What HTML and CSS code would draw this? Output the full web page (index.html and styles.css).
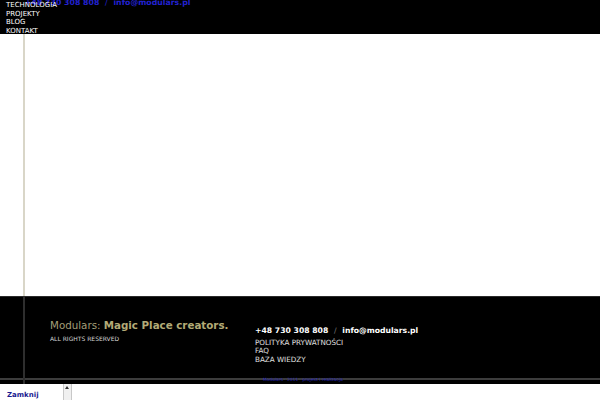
FILE: index.html
```html
<!DOCTYPE html>
<html lang="pl">
<head>
<meta charset="utf-8">
<title>Modulars</title>
<link rel="stylesheet" href="styles.css">
</head>
<body>
<div class="page">
  <header class="header">
    <div class="top-contact">+48 730 308 808 <span class="sep">/</span> info@modulars.pl</div>
    <ul class="nav">
      <li>TECHNOLOGIA</li>
      <li>PROJEKTY</li>
      <li>BLOG</li>
      <li>KONTAKT</li>
    </ul>
  </header>
  <main class="content"></main>
  <footer class="footer">
    <div class="footer-main">
      <div class="footer-left">
        <div class="claim"><span class="claim-light">Modulars: </span><strong>Magic Place creators.</strong></div>
        <div class="rights">ALL RIGHTS RESERVED</div>
      </div>
      <div class="footer-right">
        <div class="phone">+48 730 308 808 <span class="slash">/</span> info@modulars.pl</div>
        <ul class="links">
          <li>POLITYKA PRYWATNOŚCI</li>
          <li>FAQ</li>
          <li>BAZA WIEDZY</li>
        </ul>
      </div>
    </div>
    <div class="footer-rule"></div>
    <div class="credits">Modulars · 2011 · projekt i realizacja</div>
  </footer>
  <div class="vline"></div>
  <div class="bottom">
    <span class="close">Zamknij</span>
    <div class="scroll"><span class="arrow"></span></div>
  </div>
</div>
</body>
</html>
```
FILE: styles.css
```css
html, body {
  margin: 0;
  padding: 0;
  background: #fff;
  font-family: "DejaVu Sans", sans-serif;
}
.page {
  position: relative;
  width: 600px;
  height: 400px;
  overflow: hidden;
}
.header {
  position: relative;
  height: 34px;
  background: #000;
}
.top-contact {
  position: absolute;
  left: 25px;
  top: -1px;
  font-size: 7.8px;
  line-height: 8px;
  font-weight: bold;
  color: #2222d0;
  white-space: pre;
}
.top-contact .sep {
  font-weight: normal;
  margin: 0 3px;
}
.nav {
  position: relative;
  list-style: none;
  margin: 0;
  padding: 1px 0 0 6px;
  font-size: 7px;
  line-height: 8.5px;
  color: #fff;
}
.content {
  height: 262px;
  background: #fff;
}
.footer {
  position: relative;
  height: 88px;
  background: #000;
  border-top: 1px solid #2a2a2a;
  box-sizing: border-box;
  display: flex;
  flex-direction: column;
}
.footer-main {
  flex: 1;
  display: flex;
  padding-left: 50px;
}
.footer-left {
  width: 205px;
  padding-top: 22px;
}
.claim {
  font-size: 10.3px;
  line-height: 12px;
  color: #a39e78;
  white-space: nowrap;
}
.claim strong {
  color: #b3ab76;
}
.rights {
  margin-top: 4px;
  font-size: 6px;
  line-height: 8px;
  color: #d6d6d6;
}
.footer-right {
  padding-top: 29px;
}
.phone {
  font-size: 7.7px;
  line-height: 10px;
  font-weight: bold;
  color: #fff;
  white-space: pre;
}
.phone .slash {
  font-weight: normal;
  color: #777;
  margin: 0 3px;
}
.links {
  list-style: none;
  margin: 3px 0 0;
  padding: 0;
  font-size: 7.2px;
  line-height: 8.3px;
  color: #e0e0e0;
}
.footer-rule {
  height: 2px;
  background: #3c3c3c;
  margin-bottom: 4px;
}
.credits {
  position: absolute;
  left: 263px;
  bottom: 2px;
  font-size: 4.4px;
  line-height: 5px;
  color: #2020b8;
  white-space: nowrap;
}
.vline {
  position: absolute;
  left: 23px;
  top: 34px;
  width: 2px;
  height: 350px;
  background: linear-gradient(#d9d6c8 0 262px, #2e2e2e 262px);
}
.bottom {
  position: relative;
  height: 16px;
  background: #fff;
}
.close {
  position: absolute;
  left: 7px;
  top: 7px;
  font-size: 7px;
  font-weight: bold;
  color: #1a1a90;
}
.scroll {
  position: absolute;
  left: 63px;
  top: 0;
  width: 7px;
  height: 16px;
  background: #f0f0f0;
  border-left: 1px solid #c8c8c8;
  border-right: 1px solid #c8c8c8;
}
.arrow {
  position: absolute;
  left: 1px;
  top: 2px;
  width: 0;
  height: 0;
  border-left: 2.5px solid transparent;
  border-right: 2.5px solid transparent;
  border-bottom: 3px solid #333;
}
```
